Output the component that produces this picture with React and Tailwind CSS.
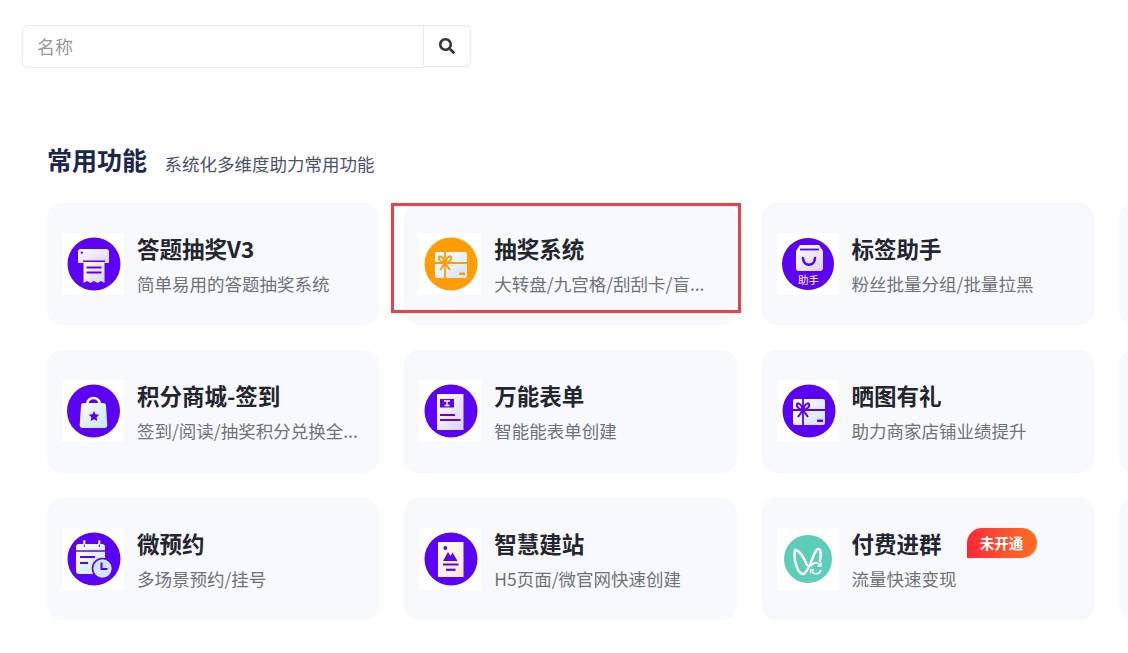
import React from 'react';
import { FaSearch } from 'react-icons/fa';

const PURPLE = '#5b02f5';

const Shade = ({ id, from = '#ffffff', to = '#dcd2fb' }) => (
  <defs>
    <linearGradient id={id} x1="0" y1="0" x2="1" y2="1">
      <stop offset="0" stopColor={from} />
      <stop offset="1" stopColor={to} />
    </linearGradient>
  </defs>
);

const Frame = ({ id, bg = PURPLE, from, to, cx = 32, cy = 31, r = 26.5, children }) => (
  <svg viewBox="0 0 62 62" className="w-[62px] h-[62px] shrink-0 bg-white">
    <Shade id={id} from={from} to={to} />
    <circle cx={cx} cy={cy} r={r} fill={bg} />
    {children}
  </svg>
);

const PrinterIcon = () => (
  <Frame id="g1">
    <path d="M19 16h25a3 3 0 0 1 3 3v11H16V19a3 3 0 0 1 3-3z" fill="url(#g1)" />
    <circle cx="19.8" cy="19.6" r="1.2" fill={PURPLE} />
    <path d="M21 27.5h22v1.5H21z" fill={PURPLE} />
    <path d="M21.5 29h21v21l-3.5-2-3.5 2-3.5-2-3.5 2-3.5-2-3.5 2z" fill="url(#g1)" />
    <path d="M24.5 33.5h15v2h-15zM24.500 38.500h15v2h-15z" fill={PURPLE} />
  </Frame>
);

const GiftCard = ({ id, color, bg, from, to }) => (
  <Frame id={id} bg={bg} from={from} to={to}>
    <rect x="16" y="19" width="32" height="26" rx="2" fill={`url(#${id})`} />
    <path d="M26 19v26M16 30h32" stroke={color} strokeWidth="1.800" fill="none" />
    <path d="M26 30c-5-1-7-4-6-6 1.500-2 5 1 6 6zM26 30c5-1 7-4 6-6-1.500-2-5 1-6 6zM26 30l-5 7M26 30l5 7" stroke={color} strokeWidth="2" fill="none" />
    <rect x="40" y="39.500" width="6" height="2.500" rx="0.500" fill={color} />
  </Frame>
);

const BagIcon = () => (
  <Frame id="g3" cx={31} cy={31} r={26}>
    <path d="M23 12h19l4 6v17a3 3 0 0 1-3 3H22a3 3 0 0 1-3-3V18z" fill="url(#g3)" />
    <path d="M23 16.500h19" stroke={PURPLE} strokeWidth="1.800" />
    <path d="M26 25c0 9 12 9 12 0" stroke={PURPLE} strokeWidth="2.600" fill="none" strokeLinecap="round" />
    <text x="31.500" y="51" textAnchor="middle" fontSize="10.500" fill="#fff" fontFamily='"Noto Sans CJK SC", sans-serif'>助手</text>
  </Frame>
);

const LockIcon = () => (
  <Frame id="g4" from="#ffffff" to="#bfe6fb" cx={31.500} cy={31}>
    <path d="M25.500 24v-1a6 5 0 0 1 12 0v1" stroke="#fff" strokeWidth="2.500" fill="none" />
    <path d="M22 23h19a3 3 0 0 1 3 3l1.300 19a3 3 0 0 1-3 3H20.700a3 3 0 0 1-3-3L19 26a3 3 0 0 1 3-3z" fill="url(#g4)" />
    <path d="M32 31l1.600 3.300 3.600 0.500-2.600 2.500 0.600 3.600-3.200-1.700-3.200 1.700 0.600-3.600-2.600-2.500 3.600-0.500z" fill={PURPLE} />
  </Frame>
);

const FormIcon = () => (
  <Frame id="g5">
    <rect x="18" y="14" width="26.500" height="36" fill="url(#g5)" />
    <rect x="21" y="19" width="14" height="8.500" fill={PURPLE} />
    <path d="M25 21h6M28 21v4.500M25.500 25.500h5" stroke="#fff" strokeWidth="1.300" fill="none" />
    <path d="M21 35h15M21 40h20.500" stroke={PURPLE} strokeWidth="2" />
  </Frame>
);

const CalendarIcon = () => (
  <Frame id="g6" from="#ffffff" to="#c4e4fb">
    <rect x="14" y="16" width="29" height="30" rx="3" fill="url(#g6)" />
    <path d="M22.300 13v6M37.300 13v6" stroke="#fff" strokeWidth="2" strokeLinecap="round" />
    <path d="M22.300 16.500v2.500M37.300 16.500v2.500" stroke={PURPLE} strokeWidth="1" />
    <path d="M14 23h29" stroke={PURPLE} strokeWidth="1.500" />
    <path d="M18 29h15M18 35h8" stroke={PURPLE} strokeWidth="2" />
    <circle cx="40.500" cy="40.500" r="10" fill="#cfe9fb" stroke={PURPLE} strokeWidth="1.600" />
    <path d="M39.500 34.500v6.500h6" stroke={PURPLE} strokeWidth="2" fill="none" />
  </Frame>
);

const PictureIcon = () => (
  <Frame id="g7" from="#ffffff" to="#fbe6cf">
    <rect x="19" y="14" width="25.500" height="35" fill="url(#g7)" />
    <circle cx="26.300" cy="20" r="1.900" fill={PURPLE} />
    <path d="M24 33l5-9 2.500 4 2-3.500 5 8.500z" fill={PURPLE} />
    <path d="M24 36.500h15.500" stroke={PURPLE} strokeWidth="2" />
    <path d="M27 41.800h9.500" stroke={PURPLE} strokeWidth="2.200" />
  </Frame>
);

const GroupIcon = () => (
  <Frame id="g8" bg="#5ccdb9" cx={31} cy={31} r={24}>
    <path d="M18 22c-2 10 3 24 8 24 3 0 7-9 10-17 2-5 4-9 6-8 2 1 2 7 1 12" stroke="#fff" strokeWidth="2.400" fill="none" strokeLinecap="round" />
    <path d="M18 22c4 0 9 8 12 15" stroke="#fff" strokeWidth="2.400" fill="none" strokeLinecap="round" />
    <path d="M34 38.500a5 5 0 0 1 9-1.500M44 42a5 5 0 0 1-9 1.500" stroke="#fff" strokeWidth="1.600" fill="none" />
    <path d="M44 34.500v3.500h-3.500M33.500 45.500V42H37" stroke="#fff" strokeWidth="1.400" fill="none" />
  </Frame>
);

const items = [
  { title: '答题抽奖V3', desc: '简单易用的答题抽奖系统', icon: <PrinterIcon /> },
  { title: '抽奖系统', desc: '大转盘/九宫格/刮刮卡/盲...', icon: <GiftCard id="g2" color="#ff9d06" bg="#ff9d06" from="#ffffff" to="#cfe4f7" /> },
  { title: '标签助手', desc: '粉丝批量分组/批量拉黑', icon: <BagIcon /> },
  null,
  { title: '积分商城-签到', desc: '签到/阅读/抽奖积分兑换全...', icon: <LockIcon /> },
  { title: '万能表单', desc: '智能能表单创建', icon: <FormIcon /> },
  { title: '晒图有礼', desc: '助力商家店铺业绩提升', icon: <GiftCard id="g9" color={PURPLE} bg={PURPLE} from="#ffffff" to="#cfe0fb" /> },
  null,
  { title: '微预约', desc: '多场景预约/挂号', icon: <CalendarIcon /> },
  { title: '智慧建站', desc: 'H5页面/微官网快速创建', icon: <PictureIcon /> },
  { title: '付费进群', desc: '流量快速变现', icon: <GroupIcon />, badge: '未开通' },
  null,
];

const Card = ({ item }) => {
  if (!item) return <div className="bg-[#f8f9fd] rounded-[15px]" />;
  return (
    <div className="relative flex items-center pl-[15px] bg-[#f8f9fd] rounded-[15px]">
      {item.icon}
      <div className="ml-[13px] w-[240px]">
        <div className="text-[22.5px] leading-[36px] font-bold text-[#23262e]">{item.title}</div>
        <div className="text-[17.5px] leading-[28px] mt-[4px] text-[#6f7278] whitespace-nowrap">{item.desc}</div>
      </div>
      {item.badge && (
        <span className="absolute left-[205px] top-[30px] w-[70px] h-[30px] flex items-center justify-center rounded-t-full rounded-br-full bg-gradient-to-r from-[#ff2235] to-[#ff6c22] text-white text-[14.5px] font-bold">
          {item.badge}
        </span>
      )}
    </div>
  );
};

export default function App() {
  return (
    <div className="relative w-[1128px] h-[653px] overflow-hidden bg-white font-['Noto_Sans_CJK_SC','Noto_Sans',sans-serif]">
      <div className="pt-[25px] pl-[22px]">
        <div className="flex w-[449px] h-[43px]">
          <input
            placeholder="名称"
            className="w-[402px] h-full pl-[14px] pb-[2px] border border-[#eaeaea] rounded-l-[6px] text-[18px] placeholder-[#999999] outline-none"
          />
          <button className="w-[47px] h-[42px] flex items-center justify-center border border-l-0 border-[#eaeaea] rounded-r-[6px]">
            <FaSearch className="w-[16px] h-[16px] text-[#333]" />
          </button>
        </div>
      </div>

      <div className="pl-[47px] mt-[75px] flex items-end h-[40px]">
        <h2 className="text-[25px] leading-[40px] font-bold mb-[4.5px] text-[#1a2550]">常用功能</h2>
        <span className="ml-[17.5px] text-[17.5px] leading-[36px] mb-[1px] text-[#4a5274]">系统化多维度助力常用功能</span>
      </div>

      <div className="ml-[47px] mt-[20px] grid grid-cols-[repeat(4,332.3px)] auto-rows-[122.3px] gap-[25px]">
        {items.map((item, i) => (
          <Card key={i} item={item} />
        ))}
      </div>

      <div className="absolute left-[391px] top-[203px] w-[350px] h-[110px] border-[3px] border-[#e8434a] pointer-events-none" />
    </div>
  );
}
